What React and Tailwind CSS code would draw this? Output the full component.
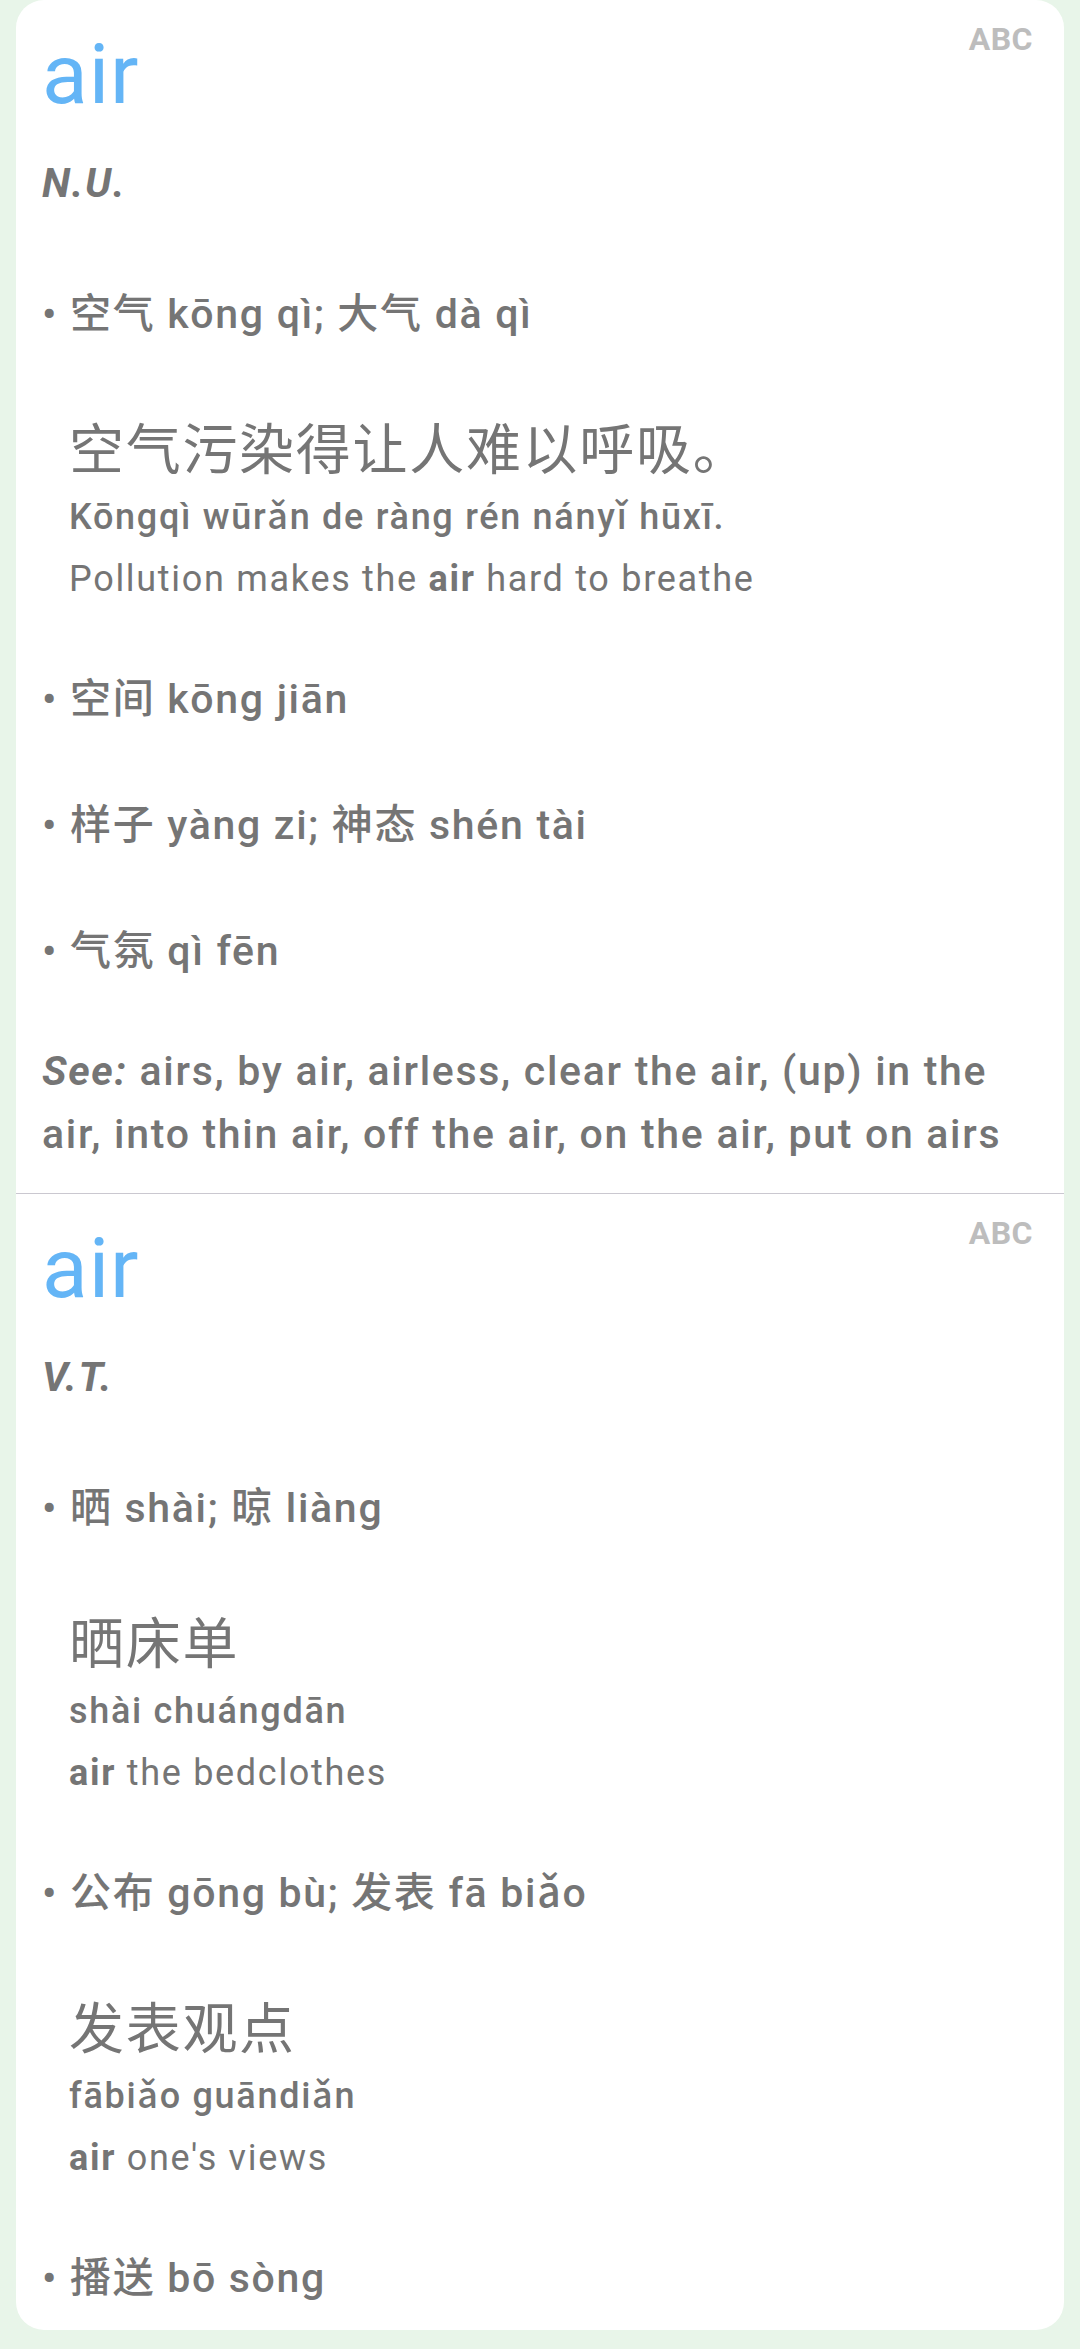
import React from 'react';

const entries = [
  {
    pos: 'N.U.',
    senses: [
      {
        text: '空气 kōng qì; 大气 dà qì',
        example: {
          zh: '空气污染得让人难以呼吸。',
          py: 'Kōngqì wūrǎn de ràng rén nányǐ hūxī.',
          en: ['Pollution makes the ', 'air', ' hard to breathe'],
        },
      },
      { text: '空间 kōng jiān' },
      { text: '样子 yàng zi; 神态 shén tài' },
      { text: '气氛 qì fēn' },
    ],
    see: 'airs, by air, airless, clear the air, (up) in the air, into thin air, off the air, on the air, put on airs',
  },
  {
    pos: 'V.T.',
    senses: [
      {
        text: '晒 shài; 晾 liàng',
        example: { zh: '晒床单', py: 'shài chuángdān', en: ['', 'air', ' the bedclothes'] },
      },
      {
        text: '公布 gōng bù; 发表 fā biǎo',
        example: { zh: '发表观点', py: 'fābiǎo guāndiǎn', en: ['', 'air', " one's views"] },
      },
      { text: '播送 bō sòng' },
    ],
  },
];

const Sense = ({ sense, first, prevHadExample }) => {
  const gap = first ? 'mt-[75px]' : prevHadExample ? 'mt-[61px]' : 'mt-[70px]';
  return (
    <div className={gap}>
      <p className="text-[41px] leading-[56px] font-medium">• {sense.text}</p>
      {sense.example && (
        <div className="mt-[72px] pl-[27px]">
          <p className="text-[55px] leading-[72px]">{sense.example.zh}</p>
          <p className="text-[36px] leading-[62px] font-medium">{sense.example.py}</p>
          <p className="text-[36px] leading-[62px]">
            {sense.example.en[0]}
            <span className="font-bold">{sense.example.en[1]}</span>
            {sense.example.en[2]}
          </p>
        </div>
      )}
    </div>
  );
};

const Entry = ({ entry, last }) => (
  <section className={`relative pl-[26px] pr-[31px] pt-[33px] ${last ? 'pb-[24px]' : 'pb-[27px] border-b border-[#cac8d0]'}`}>
    <span className="absolute top-[23px] right-[31px] text-[32px] leading-[32px] font-bold tracking-[0.5px] text-[#bdbdbd]">ABC</span>
    <h1 className="text-[84px] leading-[84px] tracking-[1px] text-[#64b5f6]">air</h1>
    <p className="mt-[38px] text-[41px] leading-[56px] italic font-bold">{entry.pos}</p>
    {entry.senses.map((s, i) => (
      <Sense
        key={i}
        sense={s}
        first={i === 0}
        prevHadExample={i > 0 && !!entry.senses[i - 1].example}
      />
    ))}
    {entry.see && (
      <p className="mt-[61px] text-[41px] leading-[63px] font-medium">
        <span className="italic font-bold">See:</span> {entry.see}
      </p>
    )}
  </section>
);

export default function App() {
  return (
    <div className="min-h-screen bg-[#e8f5e9] px-[16px] pb-[15px] font-[Roboto,'Noto_Sans_CJK_SC',sans-serif] tracking-[1.7px] text-[#757575]">
      <div className="bg-white rounded-[28px] overflow-hidden">
        {entries.map((e, i) => (
          <Entry key={i} entry={e} last={i === entries.length - 1} />
        ))}
      </div>
    </div>
  );
}
